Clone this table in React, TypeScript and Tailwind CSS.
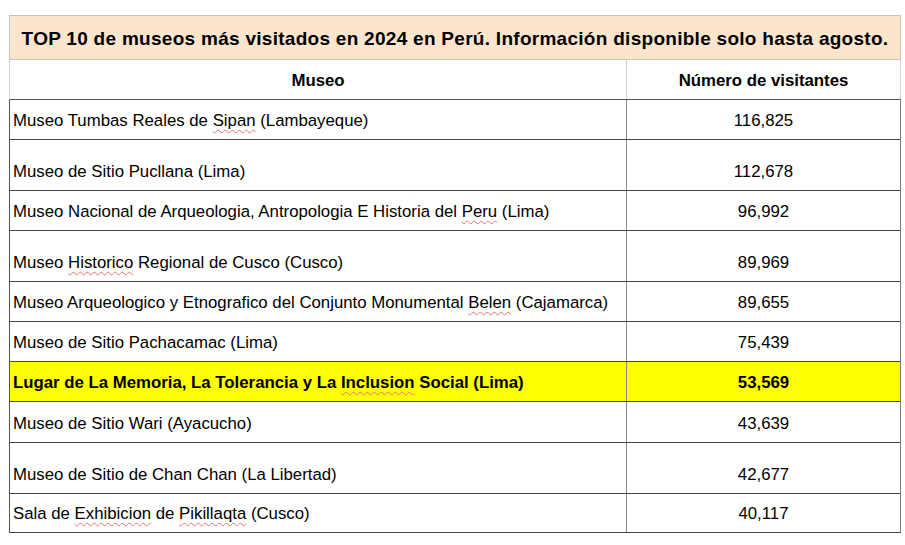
const rows: { name: React.ReactNode; visits: string; h: string; hl?: boolean }[] = [
  {
    name: (
      <>
        Museo Tumbas Reales de <Typo>Sipan</Typo> (Lambayeque)
      </>
    ),
    visits: "116,825",
    h: "h-[40px]",
  },
  { name: "Museo de Sitio Pucllana (Lima)", visits: "112,678", h: "h-[51px]" },
  {
    name: (
      <>
        Museo Nacional de Arqueologia, Antropologia E Historia del <Typo>Peru</Typo> (Lima)
      </>
    ),
    visits: "96,992",
    h: "h-[40px]",
  },
  {
    name: (
      <>
        Museo <Typo>Historico</Typo> Regional de Cusco (Cusco)
      </>
    ),
    visits: "89,969",
    h: "h-[51px]",
  },
  {
    name: (
      <>
        Museo Arqueologico y Etnografico del Conjunto Monumental <Typo>Belen</Typo> (Cajamarca)
      </>
    ),
    visits: "89,655",
    h: "h-[40px]",
  },
  { name: "Museo de Sitio Pachacamac (Lima)", visits: "75,439", h: "h-[40px]" },
  {
    name: (
      <>
        Lugar de La Memoria, La Tolerancia y La <Typo>Inclusion</Typo> Social (Lima)
      </>
    ),
    visits: "53,569",
    h: "h-[40px]",
    hl: true,
  },
  { name: "Museo de Sitio Wari (Ayacucho)", visits: "43,639", h: "h-[41px]" },
  { name: "Museo de Sitio de Chan Chan (La Libertad)", visits: "42,677", h: "h-[51px]" },
  {
    name: (
      <>
        Sala de <Typo>Exhibicion</Typo> de <Typo>Pikillaqta</Typo> (Cusco)
      </>
    ),
    visits: "40,117",
    h: "h-[39px]",
  },
];

function Typo({ children }: { children: React.ReactNode }) {
  return (
    <span className="underline decoration-wavy decoration-[#e57373] decoration-1 underline-offset-[3px]">
      {children}
    </span>
  );
}

export default function App() {
  return (
    <div className="min-h-[545px] bg-white pl-[9px] pt-[15px] font-['Liberation_Sans',Arial,sans-serif] text-black">
      <div className="w-[892px]">
        <div className="flex h-[45px] items-end justify-center whitespace-nowrap border border-[#c4c4c4] bg-[#fce5cd] pb-[9px] text-[19px] font-bold leading-[22px] tracking-[0.28px]">
          TOP 10 de museos más visitados en 2024 en Perú. Información disponible solo hasta agosto.
        </div>

        <div className="flex h-[40px] border-x border-b border-x-[#d4d4d4] border-b-[#555] text-[16.8px] font-bold leading-[19px]">
          <div className="flex w-[617px] items-end justify-center border-r border-[#cfcfcf] pb-[9px]">Museo</div>
          <div className="flex flex-1 items-end justify-center pb-[9px]">Número de visitantes</div>
        </div>

        <div className="border-l border-r border-l-[#555] border-r-[#777] text-[16.8px] leading-[19px]">
          {rows.map((r, i) => (
            <div
              key={i}
              className={`flex border-b border-[#444] ${r.h} ${r.hl ? "bg-[#ffff00] font-bold" : ""}`}
            >
              <div className="flex w-[617px] items-end border-r border-[#888] pb-[9px] pl-[3px]">
                <span className="whitespace-nowrap">{r.name}</span>
              </div>
              <div className="flex flex-1 items-end justify-center pb-[9px]">{r.visits}</div>
            </div>
          ))}
        </div>
      </div>
    </div>
  );
}
